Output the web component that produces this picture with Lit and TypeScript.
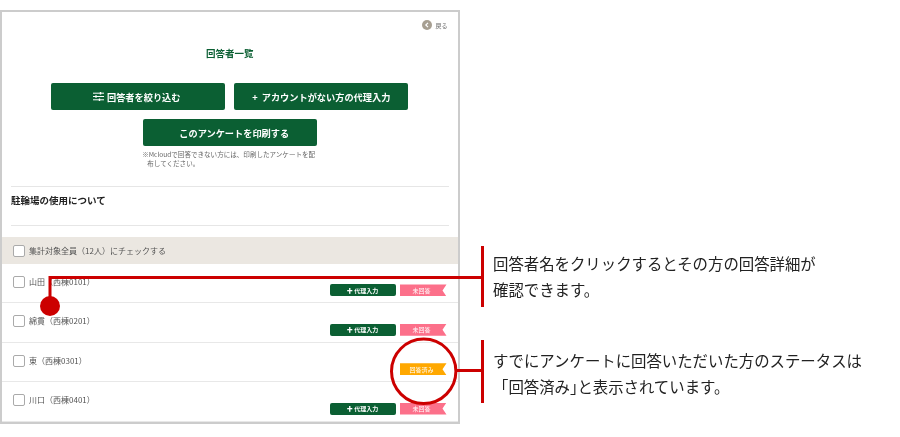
import { LitElement, html, css, svg } from "lit";
import { customElement } from "lit/decorators.js";

const rows = [
  { name: "山田（西棟0101）", done: false },
  { name: "綿貫（西棟0201）", done: false },
  { name: "東（西棟0301）", done: true },
  { name: "川口（西棟0401）", done: false },
];

@customElement("app-root")
export class AppRoot extends LitElement {
  static styles = css`
    :host {
      display: block;
      position: relative;
      width: 900px;
      height: 437px;
      overflow: hidden;
      background: #fff;
      font-family: "Noto Sans CJK JP", "Noto Sans", sans-serif;
      color: #555;
    }
    .card {
      box-sizing: border-box;
      width: 459.5px;
      height: 414px;
      margin-top: 10px;
      border: 2px solid #ccc;
      background: #fff;
      filter: blur(0.3px);
    }
    .back {
      display: flex;
      justify-content: flex-end;
      align-items: center;
      gap: 3px;
      height: 10px;
      margin: 8px 10px 0 0;
      font-size: 6px;
      color: #666;
    }
    .back-dot {
      width: 10px;
      height: 10px;
    }
    .title {
      margin: 16px 0 0;
      text-align: center;
      font-size: 9.5px;
      line-height: 14px;
      font-weight: 700;
      color: #0b5f33;
    }
    .buttons {
      display: flex;
      flex-wrap: wrap;
      justify-content: center;
      gap: 9px;
      margin-top: 23px;
    }
    .btn {
      display: flex;
      align-items: center;
      justify-content: center;
      gap: 3px;
      box-sizing: border-box;
      width: 174px;
      height: 27px;
      border-radius: 2px;
      background: #0b5f33;
      color: #fff;
      font-size: 9.2px;
      font-weight: 700;
    }
    .btn.print {
      padding-left: 9px;
    }
    .btn.filter {
      padding-right: 3px;
    }
    .note {
      width: 175px;
      margin: 4px auto 0;
      padding-left: 5px;
      text-indent: -5px;
      box-sizing: border-box;
      font-size: 6.55px;
      line-height: 9px;
      color: #666;
    }
    .survey {
      box-sizing: border-box;
      margin: 18px 9px 0;
      border-top: 1px solid #e6e6e6;
      border-bottom: 1px solid #e6e6e6;
      height: 40px;
      font-size: 9.5px;
      line-height: 14px;
      font-weight: 700;
      color: #222;
      padding-top: 6px;
    }
    .all {
      display: flex;
      align-items: center;
      gap: 4px;
      height: 27px;
      margin-top: 11px;
      padding-left: 11px;
      background: #ebe7e1;
      font-size: 8px;
    }
    .box {
      flex: none;
      box-sizing: border-box;
      width: 12px;
      height: 12px;
      border: 1px solid #aaa;
      border-radius: 2px;
      background: #fff;
    }
    .row {
      box-sizing: border-box;
      display: grid;
      grid-template-columns: 1fr auto;
      height: 39.4px;
      padding: 12px 11px 6px 11px;
      border-bottom: 1px solid #e8e8e8;
      font-size: 8px;
    }
    .who {
      display: flex;
      align-items: flex-start;
      gap: 4px;
      align-self: start;
      height: 12px;
      line-height: 11px;
    }
    .actions {
      display: flex;
      align-items: center;
      gap: 4px;
      align-self: end;
    }
    .proxy {
      display: flex;
      align-items: center;
      justify-content: center;
      gap: 2px;
      width: 66px;
      height: 12px;
      border-radius: 2px;
      background: #0b5f33;
      color: #fff;
      font-size: 6px;
      font-weight: 700;
    }
    .flag {
      display: flex;
      align-items: center;
      justify-content: center;
      width: 47px;
      height: 12px;
      padding-right: 3px;
      box-sizing: border-box;
      color: #fff;
      font-size: 6px;
      background: #fc708a;
      clip-path: polygon(0 0, 100% 0, calc(100% - 4px) 50%, 100% 100%, 0 100%);
    }
    .flag.done {
      background: #ffa800;
    }
    .overlay {
      position: absolute;
      inset: 0;
      width: 900px;
      height: 437px;
      pointer-events: none;
    }
    .callout {
      position: absolute;
      left: 493px;
      margin: 0;
      font-size: 15.4px;
      line-height: 25.5px;
      color: #222;
      white-space: nowrap;
      filter: blur(0.2px);
    }
    .c1 {
      top: 251px;
    }
    .c2 {
      top: 348px;
    }
    .tight {
      letter-spacing: -8px;
    }
  `;

  private filterIcon() {
    return html`<svg width="11" height="9" viewBox="0 0 11 9">
      <path d="M0 1.2H11M0 4.5H11M0 7.8H11" stroke="#fff" stroke-width="1" />
      <path d="M7.5 0V2.4M3 3.3V5.7M6.5 6.6V9" stroke="#fff" stroke-width="1.4" />
    </svg>`;
  }

  render() {
    return html`
      <div class="card">
        <div class="back">
          <svg class="back-dot" viewBox="0 0 10 10">
            <circle cx="5" cy="5" r="5" fill="#a79f92" />
            <path d="M6 2.8L3.8 5L6 7.2" fill="none" stroke="#fff" stroke-width="1.2" />
          </svg>
          <span>戻る</span>
        </div>
        <div class="title">回答者一覧</div>
        <div class="buttons">
          <div class="btn filter">${this.filterIcon()}<span>回答者を絞り込む</span></div>
          <div class="btn">+ &nbsp;アカウントがない方の代理入力</div>
          <div class="btn print">このアンケートを印刷する</div>
        </div>
        <div class="note">※Mcloudで回答できない方には、印刷したアンケートを配布してください。</div>
        <div class="survey">駐輪場の使用について</div>
        <div class="all"><span class="box"></span><span>集計対象全員（12人）にチェックする</span></div>
        ${rows.map(
          (r) => html`<div class="row">
            <div class="who"><span class="box"></span><span>${r.name}</span></div>
            <div class="actions">
              ${r.done
                ? html`<span class="flag done">回答済み</span>`
                : html`<span class="proxy">✚ 代理入力</span><span class="flag">未回答</span>`}
            </div>
          </div>`
        )}
      </div>
      <svg class="overlay" viewBox="0 0 900 437">
        ${svg`
          <path d="M50 306V277.5H482" fill="none" stroke="#cc0000" stroke-width="3" />
          <circle cx="50" cy="306" r="10" fill="#cc0000" />
          <path d="M482.5 246V307" stroke="#cc0000" stroke-width="3" />
          <circle cx="423.7" cy="371.3" r="32.2" fill="none" stroke="#cc0000" stroke-width="3" />
          <path d="M456 370.5H482" stroke="#cc0000" stroke-width="3" />
          <path d="M482.5 340V403" stroke="#cc0000" stroke-width="3" />
        `}
      </svg>
      <p class="callout c1">回答者名をクリックするとその方の回答詳細が<br />確認できます。</p>
      <p class="callout c2">すでにアンケートに回答いただいた方のステータスは<br />「回答済み<span class="tight">」</span>と表示されています。</p>
    `;
  }
}
